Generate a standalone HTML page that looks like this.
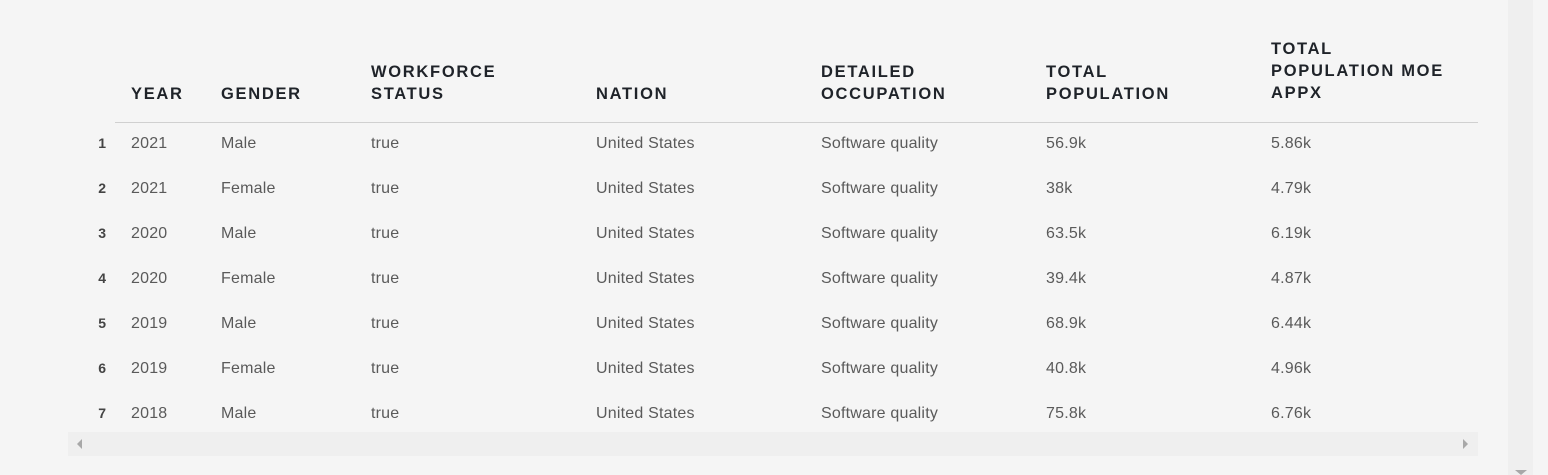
<!DOCTYPE html>
<html><head><style>
body{margin:0;width:1548px;height:475px;background:#f5f5f5;position:relative;overflow:hidden;font-family:"Liberation Sans",sans-serif}
.h{position:absolute;font-weight:bold;font-size:16.5px;letter-spacing:1.7px;color:#1f2329;line-height:22px}
.c{position:absolute;font-size:16px;color:#5a5a5a;line-height:20px;letter-spacing:0.2px}
.n{position:absolute;font-size:14px;font-weight:bold;color:#444;width:20px;text-align:right;left:86px}
</style></head><body>
<div style="position:absolute;left:1508px;top:0;width:25px;height:475px;background:#efefef"></div>
<div style="position:absolute;left:1515px;top:470px;width:0;height:0;border-left:6px solid transparent;border-right:6px solid transparent;border-top:5px solid #a8a8a8"></div>
<div style="position:absolute;left:115px;top:122px;width:1363px;height:1px;background:#d0d0d0"></div>
<div style="position:absolute;left:68px;top:432px;width:1410px;height:24px;background:#efefef"></div>
<div style="position:absolute;left:77px;top:439px;border-top:5px solid transparent;border-bottom:5px solid transparent;border-right:5px solid #a8a8a8"></div>
<div style="position:absolute;left:1463px;top:439px;border-top:5px solid transparent;border-bottom:5px solid transparent;border-left:5px solid #a8a8a8"></div>
<div class="h" style="left:131px;top:83px">YEAR</div>
<div class="h" style="left:221px;top:83px">GENDER</div>
<div class="h" style="left:371px;top:61px">WORKFORCE<br>STATUS</div>
<div class="h" style="left:596px;top:83px">NATION</div>
<div class="h" style="left:821px;top:61px">DETAILED<br>OCCUPATION</div>
<div class="h" style="left:1046px;top:61px">TOTAL<br>POPULATION</div>
<div class="h" style="left:1271px;top:38px">TOTAL<br>POPULATION MOE<br>APPX</div>
<div id="rows"></div>
<script>
var d=[["2021","Male","56.9k","5.86k"],["2021","Female","38k","4.79k"],["2020","Male","63.5k","6.19k"],["2020","Female","39.4k","4.87k"],["2019","Male","68.9k","6.44k"],["2019","Female","40.8k","4.96k"],["2018","Male","75.8k","6.76k"]];
var h="";d.forEach(function(r,i){var t=134+45*i;
h+='<div class="n" style="top:'+(t+1)+'px">'+(i+1)+'</div>';
var cols=[[131,r[0]],[221,r[1]],[371,"true"],[596,"United States"],[821,"Software quality"],[1046,r[2]],[1271,r[3]]];
cols.forEach(function(c){h+='<div class="c" style="left:'+c[0]+'px;top:'+t+'px">'+c[1]+'</div>';});});
document.getElementById("rows").innerHTML=h;
</script>
</body></html>
